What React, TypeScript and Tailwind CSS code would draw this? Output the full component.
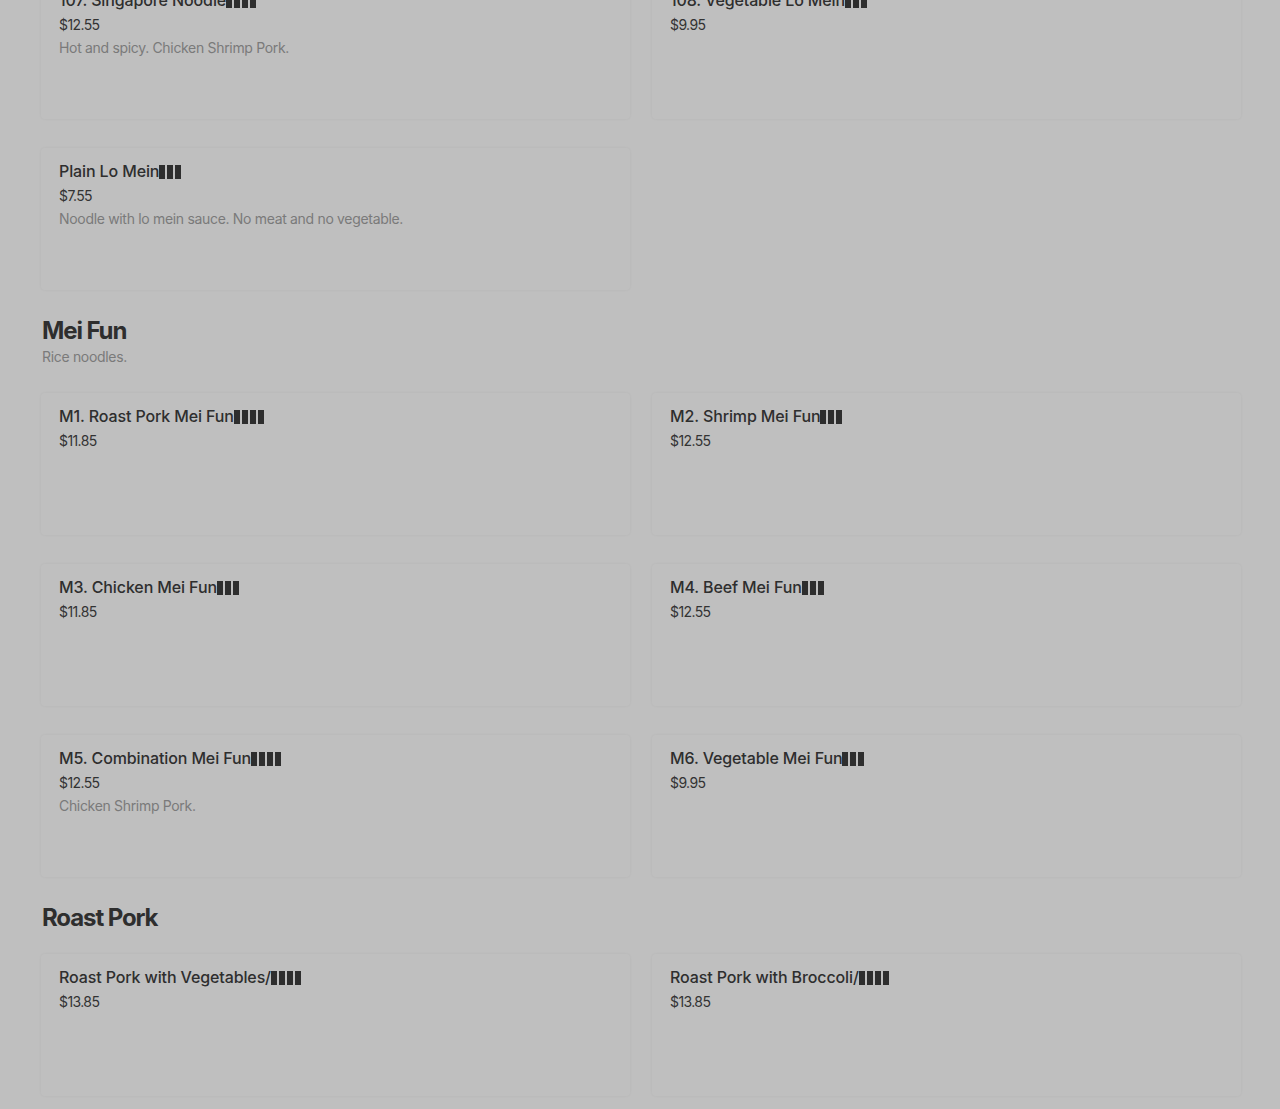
type Item = {
  name: string;
  tofu?: number;
  price: string;
  description?: string;
};

type Section = {
  title?: string;
  subtitle?: string;
  items: Item[];
};

const sections: Section[] = [
  {
    items: [
      { name: "107. Singapore Noodle", tofu: 4, price: "$12.55", description: "Hot and spicy. Chicken Shrimp Pork." },
      { name: "108. Vegetable Lo Mein", tofu: 3, price: "$9.95" },
      { name: "Plain Lo Mein", tofu: 3, price: "$7.55", description: "Noodle with lo mein sauce. No meat and no vegetable." },
    ],
  },
  {
    title: "Mei Fun",
    subtitle: "Rice noodles.",
    items: [
      { name: "M1. Roast Pork Mei Fun", tofu: 4, price: "$11.85" },
      { name: "M2. Shrimp Mei Fun", tofu: 3, price: "$12.55" },
      { name: "M3. Chicken Mei Fun", tofu: 3, price: "$11.85" },
      { name: "M4. Beef Mei Fun", tofu: 3, price: "$12.55" },
      { name: "M5. Combination Mei Fun", tofu: 4, price: "$12.55", description: "Chicken Shrimp Pork." },
      { name: "M6. Vegetable Mei Fun", tofu: 3, price: "$9.95" },
    ],
  },
  {
    title: "Roast Pork",
    items: [
      { name: "Roast Pork with Vegetables/", tofu: 4, price: "$13.85" },
      { name: "Roast Pork with Broccoli/", tofu: 4, price: "$13.85" },
    ],
  },
];

// missing-glyph boxes, as the page shows them
const Tofu = ({ count }: { count: number }) => (
  <span className="inline-flex items-center gap-[2px] align-[-2px]" aria-hidden="true">
    {Array.from({ length: count }).map((_, i) => (
      <span key={i} className="inline-block w-[6px] h-[14px] bg-[#2e2e2e]" />
    ))}
  </span>
);

const MenuCard = ({ item }: { item: Item }) => (
  <div className="h-[142px] rounded-sm pl-[18px] pr-4 pt-3 shadow-[0_0_3px_rgba(0,0,0,0.06)]">
    <h3 className="text-[16px] leading-[22px] font-medium text-[#2e2e2e] tracking-[-0.12px]">
      {item.name}
      {item.tofu ? <Tofu count={item.tofu} /> : null}
    </h3>
    <div className="mt-1 text-[14px] leading-[20px] text-[#333] tracking-[-0.6px]">{item.price}</div>
    {item.description && (
      <p className="mt-[3px] text-[14px] leading-[20px] text-[#7a7a7a] tracking-[-0.32px]">
        {item.description}
      </p>
    )}
  </div>
);

export default function App() {
  return (
    <div className="min-h-screen bg-[#bfbfbf] font-['Inter','Liberation_Sans',sans-serif] overflow-hidden">
      <div className="ml-[41px] -mt-[23px] pb-10">
        {sections.map((section, idx) => (
          <section key={idx} className={idx > 0 ? "mt-[25px]" : ""}>
            {section.title && (
              <div className={section.subtitle ? "mb-[26px]" : "mb-5"}>
                <h2 className="ml-[1px] text-[24px] leading-[32px] font-bold text-[#2e2e2e] tracking-[-1.1px]">
                  {section.title}
                </h2>
                {section.subtitle && (
                  <p className="ml-[1px] text-[14px] leading-[20px] text-[#7a7a7a] tracking-[-0.32px]">
                    {section.subtitle}
                  </p>
                )}
              </div>
            )}
            <div className="grid grid-cols-[589px_589px] gap-x-[22px] gap-y-[29px]">
              {section.items.map((item) => (
                <MenuCard key={item.name} item={item} />
              ))}
            </div>
          </section>
        ))}
      </div>
    </div>
  );
}
